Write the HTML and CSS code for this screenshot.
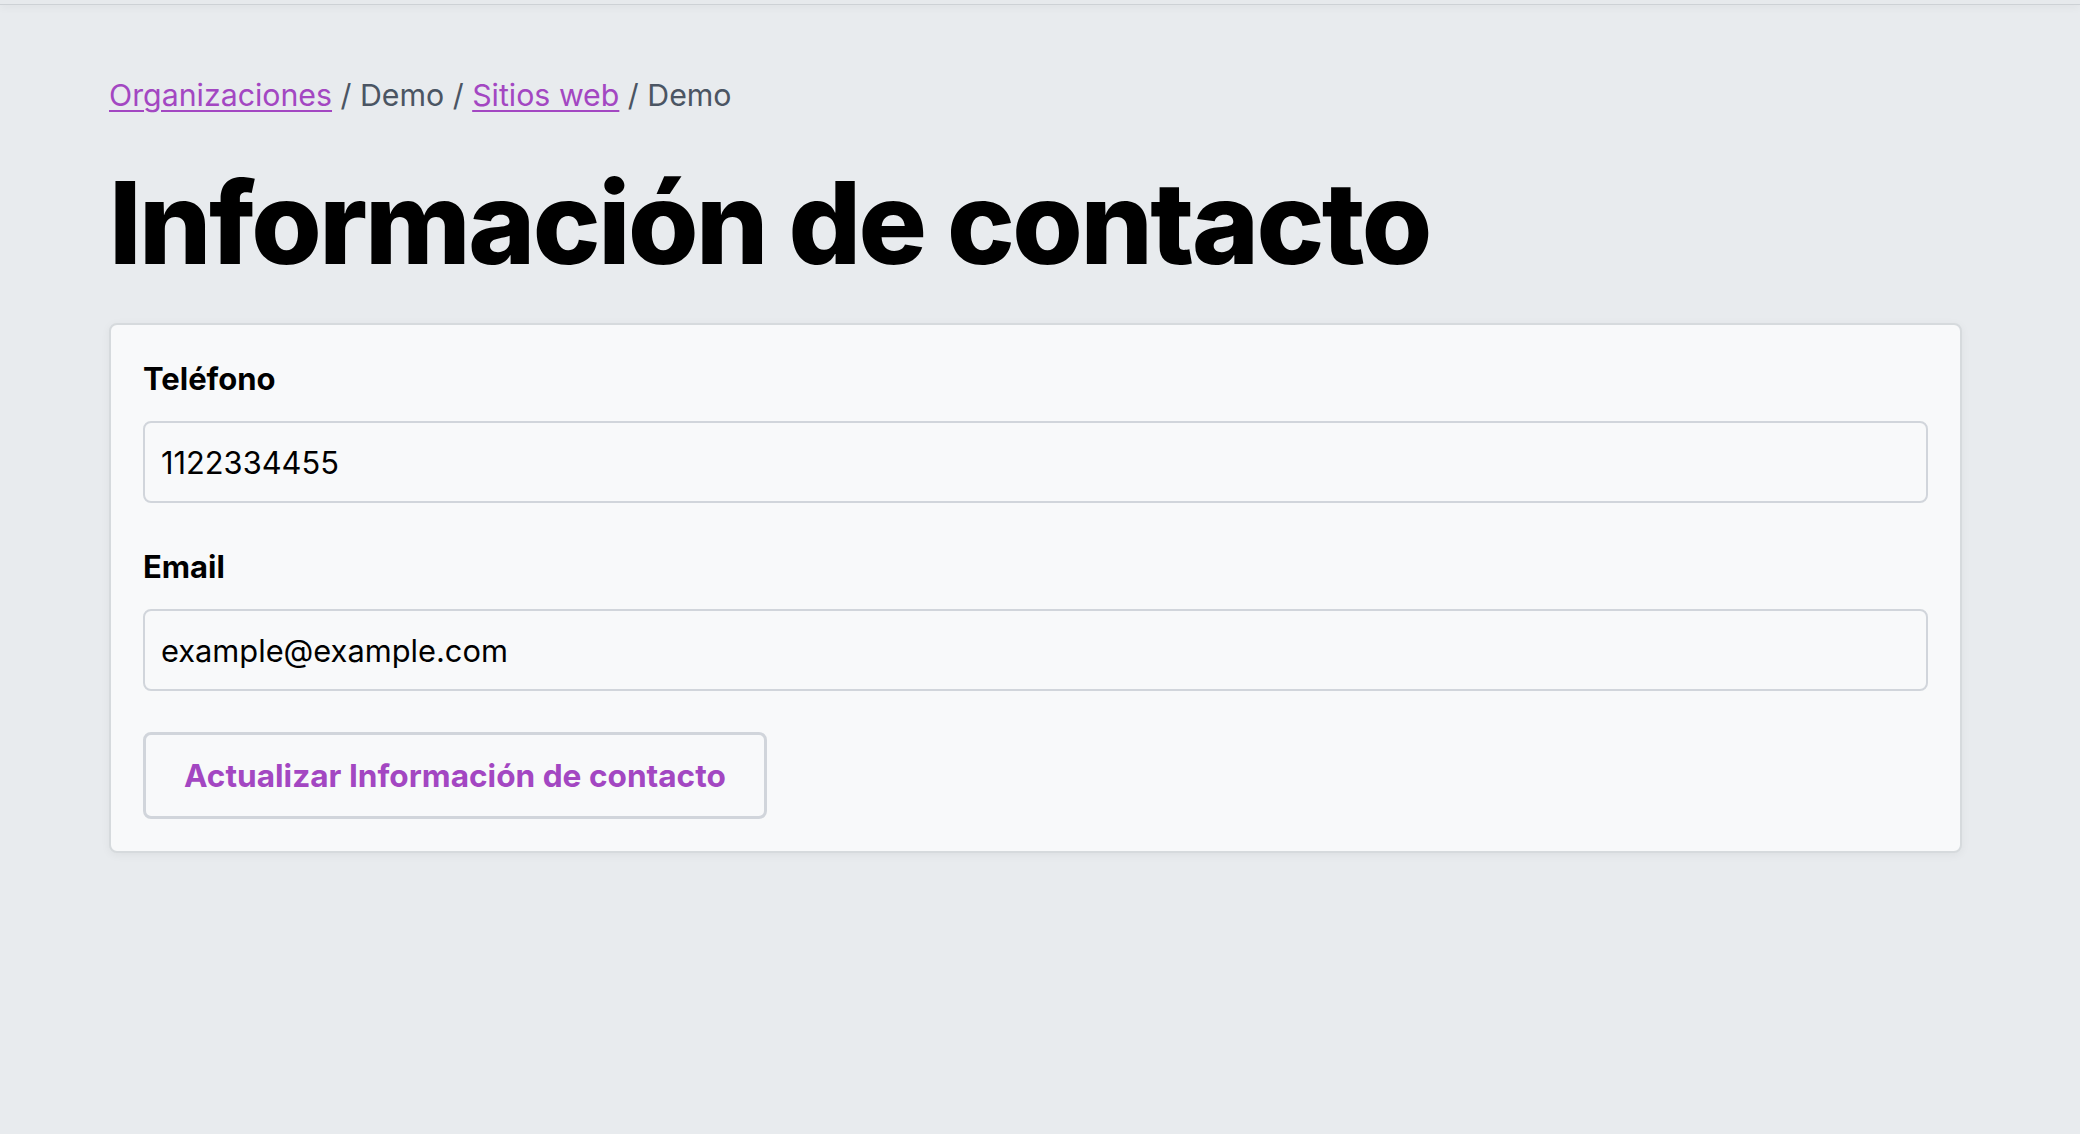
FILE: index.html
```html
<!DOCTYPE html>
<html lang="es">
<head>
<meta charset="utf-8">
<title>Información de contacto</title>
<link rel="stylesheet" href="styles.css">
</head>
<body>
<div class="topbar"></div>
<main class="page">
  <nav class="breadcrumb">
    <a href="#">Organizaciones</a> / Demo / <a href="#">Sitios web</a> / Demo
  </nav>
  <h1 class="title">Información de contacto</h1>
  <form class="card">
    <div class="field">
      <label class="label" for="tel">Teléfono</label>
      <input class="input" id="tel" type="text" value="1122334455">
    </div>
    <div class="field">
      <label class="label" for="email">Email</label>
      <input class="input" id="email" type="text" value="example@example.com">
    </div>
    <button class="button" type="button">Actualizar Información de contacto</button>
  </form>
</main>
</body>
</html>
```

FILE: styles.css
```css
* { box-sizing: border-box; }

html, body {
  margin: 0;
  padding: 0;
}

body {
  background: #e8ebee;
  font-family: Inter, "Noto Sans", sans-serif;
  color: #000;
  min-height: 1134px;
}

.topbar {
  height: 5px;
  background: #e6e9ec;
  border-bottom: 1px solid #cdd1d5;
  box-shadow: 0 2px 8px rgba(0, 0, 0, 0.06);
}

.page {
  padding: 0 118px 0 109px;
}

.breadcrumb {
  margin-top: 68px;
  font-size: 30.3px;
  line-height: 45px;
  color: #4b5563;
}

.breadcrumb a {
  color: #a347c2;
  text-decoration: underline;
  text-underline-offset: 4px;
  text-decoration-thickness: 2px;
}

.title {
  margin: 48px 0 43px;
  font-size: 114px;
  line-height: 114px;
  font-weight: 800;
  letter-spacing: -2.5px;
}

.card {
  display: flex;
  flex-direction: column;
  align-items: flex-start;
  background: #f8f9fa;
  border: 2px solid #d6dadd;
  border-radius: 8px;
  padding: 31px 32px 32px;
  box-shadow: 0 2px 10px rgba(0, 0, 0, 0.05);
}

.field {
  display: flex;
  flex-direction: column;
  width: 100%;
  margin-bottom: 41px;
}

.label {
  font-size: 31px;
  line-height: 46px;
  font-weight: 700;
  margin-bottom: 19px;
}

.input {
  width: 100%;
  height: 82px;
  padding: 0 16px;
  font-family: Inter, "Noto Sans", sans-serif;
  font-size: 30.8px;
  color: #000;
  background: #f8f9fa;
  border: 2px solid #d1d5db;
  border-radius: 8px;
  outline: none;
}

.button {
  height: 87px;
  padding: 0 38px;
  font-family: Inter, "Noto Sans", sans-serif;
  font-size: 31.6px;
  font-weight: 700;
  color: #a347c2;
  background: #f8f9fa;
  border: 3px solid #d1d5db;
  border-radius: 8px;
  cursor: pointer;
}
```
